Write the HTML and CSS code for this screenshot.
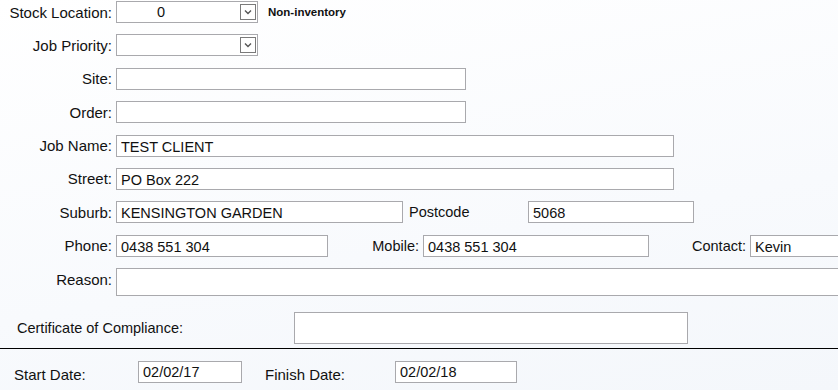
FILE: index.html
```html
<!DOCTYPE html>
<html lang="en">
<head>
  <meta charset="UTF-8" />
  <title>Job Details</title>
  <link rel="stylesheet" href="styles.css">
</head>
<body>
  <div class="job-form">
    <div class="row">
      <label class="lbl">Stock Location:</label>
      <div class="select stock">
        <span class="select-value">0</span>
        <span class="select-btn"><svg width="8" height="6" viewBox="0 0 8 6"><path d="M1 1.5 L4 4.5 L7 1.5" fill="none" stroke="#555" stroke-width="1.4"/></svg></span>
      </div>
      <span class="note">Non-inventory</span>
    </div>

    <div class="row">
      <label class="lbl">Job Priority:</label>
      <div class="select">
        <span class="select-value"></span>
        <span class="select-btn"><svg width="8" height="6" viewBox="0 0 8 6"><path d="M1 1.5 L4 4.5 L7 1.5" fill="none" stroke="#555" stroke-width="1.4"/></svg></span>
      </div>
    </div>

    <div class="row">
      <label class="lbl">Site:</label>
      <input class="field w-site" type="text">
    </div>

    <div class="row">
      <label class="lbl">Order:</label>
      <input class="field w-site" type="text">
    </div>

    <div class="row">
      <label class="lbl">Job Name:</label>
      <input class="field w-long" type="text" value="TEST CLIENT">
    </div>

    <div class="row">
      <label class="lbl">Street:</label>
      <input class="field w-long" type="text" value="PO Box 222">
    </div>

    <div class="row">
      <label class="lbl">Suburb:</label>
      <input class="field w-suburb" type="text" value="KENSINGTON GARDEN">
      <label class="lbl-left postcode">Postcode</label>
      <input class="field w-post" type="text" value="5068">
    </div>

    <div class="row">
      <label class="lbl">Phone:</label>
      <input class="field w-phone" type="text" value="0438 551 304">
      <label class="lbl mobile">Mobile:</label>
      <input class="field w-mobile" type="text" value="0438 551 304">
      <label class="lbl contact">Contact:</label>
      <input class="field w-contact" type="text" value="Kevin">
    </div>

    <div class="row">
      <label class="lbl">Reason:</label>
      <textarea class="field reason"></textarea>
    </div>
  </div>

  <div class="cert-row">
    <label class="cert-lbl">Certificate of Compliance:</label>
    <input class="field cert" type="text">
  </div>

  <div class="dates">
    <label class="date-lbl">Start Date:</label>
    <input class="field date start" type="text" value="02/02/17">
    <label class="date-lbl finish">Finish Date:</label>
    <input class="field date end" type="text" value="02/02/18">
  </div>
</body>
</html>
```

FILE: styles.css
```css
* {
  box-sizing: border-box;
}

body {
  margin: 0;
  width: 838px;
  height: 390px;
  overflow: hidden;
  font-family: "Liberation Sans", Arial, sans-serif;
  font-size: 15px;
  color: #111;
  background: linear-gradient(170deg, #ffffff 0%, #f8fafd 60%, #f4f7fb 100%);
}

.job-form {
  padding-top: 1px;
}

.row {
  display: flex;
  align-items: center;
  height: 22px;
  margin-bottom: 11.4px;
  white-space: nowrap;
}

.lbl {
  width: 112px;
  margin-right: 4px;
  text-align: right;
  flex-shrink: 0;
}

.field {
  height: 22px;
  border: 1px solid #a9a9ad;
  background: #fff;
  font-family: "Liberation Sans", Arial, sans-serif;
  font-size: 14.5px;
  color: #111;
  padding: 2px 4px 0;
  margin: 0;
  outline: none;
  flex-shrink: 0;
}

.select {
  width: 142px;
  height: 22px;
  border: 1px solid #a9a9ad;
  background: #fff;
  display: flex;
  align-items: center;
  justify-content: space-between;
}

.select-value {
  padding-left: 40px;
  font-size: 14.5px;
}

.select-btn {
  width: 16px;
  height: 16px;
  margin-right: 1px;
  border: 1px solid #7a7a7a;
  display: flex;
  align-items: center;
  justify-content: center;
}

.note {
  margin-left: 10px;
  font-size: 11.5px;
  font-weight: bold;
}

.w-site { width: 350px; }
.w-long { width: 558px; }
.w-suburb { width: 287px; }
.w-post { width: 166px; }
.w-phone { width: 212px; }
.w-mobile { width: 226px; }
.w-contact { width: 100px; }

.postcode {
  margin-left: 6px;
  width: 119px;
  font-size: 14.5px;
}

.mobile {
  width: 91px;
  font-size: 14.5px;
}

.contact {
  width: 97px;
  font-size: 14.5px;
}

.reason {
  width: 740px;
  height: 28px;
  resize: none;
  margin-top: 6px;
}

.cert-row {
  display: flex;
  align-items: center;
  margin-top: 22px;
  height: 32px;
  padding-left: 17px;
  font-size: 14.5px;
}

.cert-lbl {
  width: 277px;
}

.cert {
  width: 394px;
  height: 32px;
}

.dates {
  margin-top: 4px;
  border-top: 1px solid #000;
  display: flex;
  align-items: center;
  padding-top: 11px;
  padding-left: 14px;
  font-size: 15px;
}

.date-lbl {
  width: 124px;
  padding-top: 6px;
}

.date {
  width: 104px;
  padding-top: 0;
}

.start {
  margin-right: 23px;
}

.finish {
  width: 130px;
}

.end {
  width: 122px;
}
```
